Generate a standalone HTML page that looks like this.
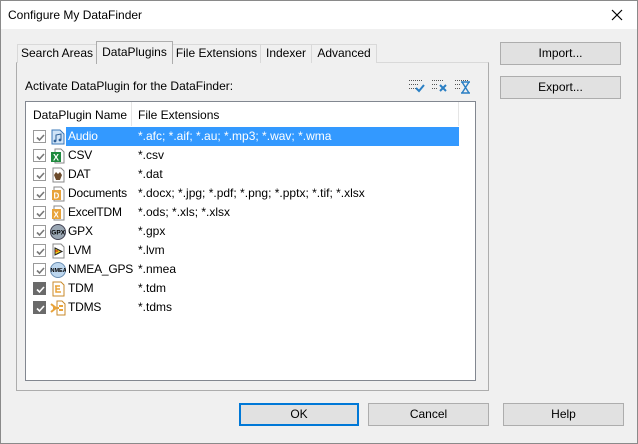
<!DOCTYPE html>
<html><head><meta charset="utf-8"><style>
*{box-sizing:border-box;margin:0;padding:0}
body{width:638px;height:444px;background:#f0f0f0;font-family:"Liberation Sans",sans-serif;font-size:12px;color:#000;position:relative;overflow:hidden}
.abs{position:absolute}
#win{left:0;top:0;width:638px;height:444px;border:1px solid #8a8a8a}
#title{left:1px;top:1px;width:636px;height:28px;background:#fff}
.btn{position:absolute;background:#e1e1e1;border:1px solid #adadad;text-align:center;line-height:21px;height:23px}
.tab{position:absolute;top:44px;height:19px;border:1px solid #d9d9d9;border-bottom:none;background:#f0f0f0;line-height:17px;text-align:center;color:#000}
.row{position:absolute;left:26px;width:433px;height:19px;line-height:19px}
.cb{position:absolute;left:7px;top:3px;width:13px;height:13px;border:1px solid #9a9a9a;background:#fff}
.cb svg{position:absolute;left:1px;top:1px}
.cb.dk{background:#6a6a6a;border-color:#6a6a6a}
.ic{position:absolute;left:24px;top:2px;width:16px;height:16px}
.nm{position:absolute;left:40px;top:0;padding:0 2px;letter-spacing:-0.2px}
.ex{position:absolute;left:112px;top:0}
</style></head><body>
<div id="win" class="abs"></div>
<div id="title" class="abs"></div>
<div class="abs" style="left:8px;top:8px;font-size:12px">Configure My DataFinder</div>
<svg class="abs" style="left:611px;top:9px" width="12" height="12"><path d="M1 1L11 11M11 1L1 11" stroke="#000" stroke-width="1.2"/></svg>

<div class="abs" style="left:16px;top:62px;width:473px;height:329px;border:1px solid #adadad;border-top-color:#d9d9d9"></div>
<div class="tab" style="left:17px;width:80px">Search Areas</div>
<div class="tab" style="left:172px;width:89px">File Extensions</div>
<div class="tab" style="left:260px;width:52px">Indexer</div>
<div class="tab" style="left:311px;width:66px">Advanced</div>
<div class="tab" style="left:96px;top:41px;height:23px;width:77px;border-color:#adadad;line-height:21px;z-index:2;background:#f0f0f0">DataPlugins</div>
<div class="abs" style="left:97px;top:62px;width:75px;height:2px;background:#f0f0f0;z-index:3"></div>

<div class="abs" style="left:25px;top:79px">Activate DataPlugin for the DataFinder:</div>
<svg class="abs" style="left:408px;top:78px" width="64" height="16">
<g stroke="#555" stroke-dasharray="1 1" stroke-width="1"><path d="M1 2.5h14M1 6.5h10M1 10.5h8"/></g>
<path d="M8 10l3 3 5-6" stroke="#2a7fc4" stroke-width="2" fill="none"/>
<g transform="translate(23,0)" stroke="#555" stroke-dasharray="1 1"><path d="M1 2.5h12M1 6.5h6M1 10.5h6"/></g>
<path d="M32 7l6 6M38 7l-6 6" stroke="#2a7fc4" stroke-width="2"/>
<g transform="translate(46,0)" stroke="#555" stroke-dasharray="1 1"><path d="M1 2.5h14M1 6.5h6M1 10.5h6"/></g>
<path d="M53 4h9M53 15h9M54 4l7 11M61 4l-7 11" stroke="#2a7fc4" stroke-width="1.4" fill="none"/>
</svg>

<div class="abs" style="left:25px;top:101px;width:451px;height:280px;background:#fff;border:1px solid #828790"></div>
<div class="abs" style="left:33px;top:108px">DataPlugin Name</div>
<div class="abs" style="left:131px;top:102px;width:1px;height:24px;background:#e5e5e5"></div>
<div class="abs" style="left:458px;top:102px;width:1px;height:24px;background:#e5e5e5"></div>
<div class="abs" style="left:138px;top:108px">File Extensions</div>

<div class="row" style="top:127px"><div class="abs" style="left:40px;top:0;width:393px;height:19px;background:#3399ff"></div>
<div class="cb"><svg width="11" height="11"><path d="M2 5.5l2.5 2.5 4.5-5" stroke="#777" stroke-width="1.6" fill="none"/></svg></div>
<svg class="ic" viewBox="0 0 16 16"><path d="M2 1h8l4 4v10H2z" fill="#cfe3f7" stroke="#3b78b8"/><path d="M6 12V6l5-1v6" stroke="#2e5f96" fill="none"/><circle cx="5" cy="12" r="1.4" fill="#2e5f96"/><circle cx="10" cy="11" r="1.4" fill="#2e5f96"/></svg>
<div class="nm" style="color:#fff">Audio</div><div class="ex" style="color:#fff">*.afc; *.aif; *.au; *.mp3; *.wav; *.wma</div></div>

<div class="row" style="top:146px"><div class="cb"><svg width="11" height="11"><path d="M2 5.5l2.5 2.5 4.5-5" stroke="#777" stroke-width="1.6" fill="none"/></svg></div>
<svg class="ic" viewBox="0 0 16 16"><path d="M5 1h6l3 3v11H5z" fill="#fff" stroke="#888"/><rect x="1" y="4" width="10" height="10" fill="#1e8a3e"/><text x="3" y="12.5" font-size="9" fill="#fff" font-family="Liberation Sans" font-weight="bold">X</text></svg>
<div class="nm">CSV</div><div class="ex">*.csv</div></div>

<div class="row" style="top:165px"><div class="cb"><svg width="11" height="11"><path d="M2 5.5l2.5 2.5 4.5-5" stroke="#777" stroke-width="1.6" fill="none"/></svg></div>
<svg class="ic" viewBox="0 0 16 16"><path d="M3 1h8l3 3v11H3z" fill="#fff" stroke="#888"/><path d="M4 8l2-3 2 2 2-2 2 3-2 5H6z" fill="#6b4a2a"/></svg>
<div class="nm">DAT</div><div class="ex">*.dat</div></div>

<div class="row" style="top:184px"><div class="cb"><svg width="11" height="11"><path d="M2 5.5l2.5 2.5 4.5-5" stroke="#777" stroke-width="1.6" fill="none"/></svg></div>
<svg class="ic" viewBox="0 0 16 16"><path d="M4 1h7l3 3v11H4z" fill="#fff" stroke="#888"/><rect x="2" y="4" width="9" height="10" fill="#e8a33a"/><text x="3.5" y="12.5" font-size="8" fill="#fff" font-family="Liberation Sans" font-weight="bold">D</text></svg>
<div class="nm">Documents</div><div class="ex">*.docx; *.jpg; *.pdf; *.png; *.pptx; *.tif; *.xlsx</div></div>

<div class="row" style="top:203px"><div class="cb"><svg width="11" height="11"><path d="M2 5.5l2.5 2.5 4.5-5" stroke="#777" stroke-width="1.6" fill="none"/></svg></div>
<svg class="ic" viewBox="0 0 16 16"><path d="M4 1h7l3 3v11H4z" fill="#fff" stroke="#888"/><rect x="2" y="4" width="9" height="10" fill="#e8a33a"/><text x="3.5" y="12.5" font-size="8" fill="#fff" font-family="Liberation Sans" font-weight="bold">X</text></svg>
<div class="nm">ExcelTDM</div><div class="ex">*.ods; *.xls; *.xlsx</div></div>

<div class="row" style="top:222px"><div class="cb"><svg width="11" height="11"><path d="M2 5.5l2.5 2.5 4.5-5" stroke="#777" stroke-width="1.6" fill="none"/></svg></div>
<svg class="ic" viewBox="0 0 16 16"><circle cx="8" cy="8" r="7.5" fill="#9aa7b4" stroke="#445"/><text x="1.3" y="10.5" font-size="6.5" fill="#000" font-family="Liberation Sans" font-weight="bold">GPX</text></svg>
<div class="nm">GPX</div><div class="ex">*.gpx</div></div>

<div class="row" style="top:241px"><div class="cb"><svg width="11" height="11"><path d="M2 5.5l2.5 2.5 4.5-5" stroke="#777" stroke-width="1.6" fill="none"/></svg></div>
<svg class="ic" viewBox="0 0 16 16"><path d="M3 1h8l3 3v11H3z" fill="#fff" stroke="#888"/><path d="M5 5l7 3.5-7 3.5z" fill="#f2d21a" stroke="#222"/><path d="M5 8h3" stroke="#c00"/></svg>
<div class="nm">LVM</div><div class="ex">*.lvm</div></div>

<div class="row" style="top:260px"><div class="cb"><svg width="11" height="11"><path d="M2 5.5l2.5 2.5 4.5-5" stroke="#777" stroke-width="1.6" fill="none"/></svg></div>
<svg class="ic" viewBox="0 0 16 16"><circle cx="8" cy="8" r="7.5" fill="#bcd6ee" stroke="#6b8fb3"/><text x="0.5" y="10" font-size="5.5" fill="#000" font-family="Liberation Sans" font-weight="bold">NMEA</text></svg>
<div class="nm">NMEA_GPS</div><div class="ex">*.nmea</div></div>

<div class="row" style="top:279px"><div class="cb dk"><svg width="11" height="11"><path d="M2 5.5l2.5 2.5 4.5-5" stroke="#fff" stroke-width="1.6" fill="none"/></svg></div>
<svg class="ic" viewBox="0 0 16 16"><path d="M3 1h8l3 3v11H3z" fill="#fff" stroke="#c98a2a"/><path d="M5 5h5M6 5v6h5M6 8h4" stroke="#e8a33a" stroke-width="1.5" fill="none"/></svg>
<div class="nm">TDM</div><div class="ex">*.tdm</div></div>

<div class="row" style="top:298px"><div class="cb dk"><svg width="11" height="11"><path d="M2 5.5l2.5 2.5 4.5-5" stroke="#fff" stroke-width="1.6" fill="none"/></svg></div>
<svg class="ic" viewBox="0 0 16 16"><path d="M7 1h5l3 3v11H7z" fill="#fff" stroke="#c98a2a"/><path d="M1 4l5 4-5 4M3 8h6M9 6h4M9 10h4" stroke="#e8a33a" stroke-width="2" fill="none"/></svg>
<div class="nm">TDMS</div><div class="ex">*.tdms</div></div>

<div class="btn" style="left:500px;top:42px;width:121px">Import...</div>
<div class="btn" style="left:500px;top:76px;width:121px">Export...</div>
<div class="btn" style="left:239px;top:403px;width:120px;border:2px solid #0078d7;line-height:19px">OK</div>
<div class="btn" style="left:368px;top:403px;width:121px">Cancel</div>
<div class="btn" style="left:503px;top:403px;width:121px">Help</div>
</body></html>
